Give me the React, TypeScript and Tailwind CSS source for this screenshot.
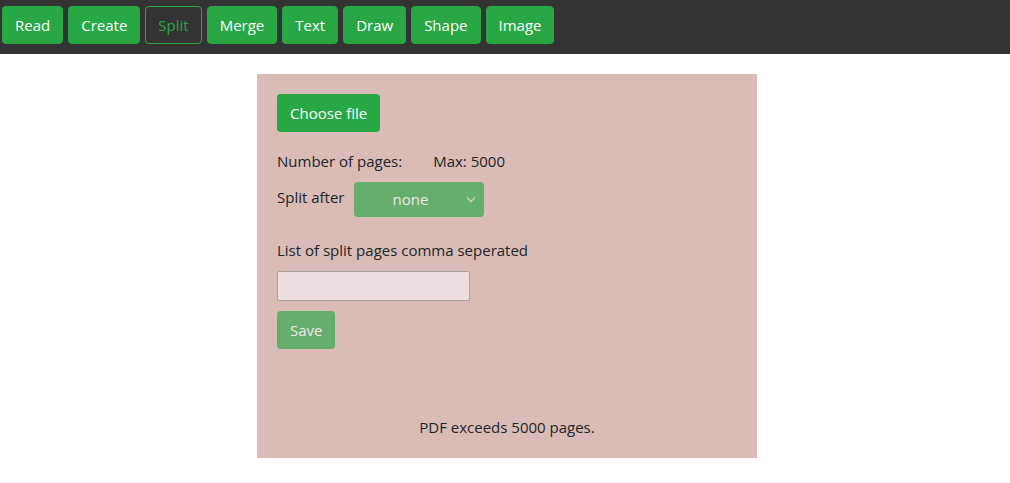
const tabs = ["Read", "Create", "Split", "Merge", "Text", "Draw", "Shape", "Image"];

export default function App() {
  return (
    <div className="min-h-screen bg-white font-['Open_Sans',sans-serif] text-[15px] text-[#212529]">
      <nav className="flex h-[54px] items-start gap-[5px] bg-[#333333] px-[2px] pt-[6px]">
        {tabs.map((t) =>
          t === "Split" ? (
            <button
              key={t}
              className="h-[38px] rounded-[4px] border border-[#28a745] px-[12px] text-[#28a745]"
            >
              {t}
            </button>
          ) : (
            <button
              key={t}
              className="h-[38px] rounded-[4px] border border-[#28a745] bg-[#28a745] px-[12px] text-white"
            >
              {t}
            </button>
          )
        )}
      </nav>

      <div className="flex justify-center pl-[4px] pt-[20px]">
        <div className="flex h-[384px] w-[500px] flex-col bg-[#dabcb6] p-[20px]">
          <div>
            <button className="h-[38px] rounded-[4px] bg-[#28a745] px-[13px] text-white">Choose file</button>
          </div>

          <div className="mt-[18px] flex gap-[31px]">
            <span>Number of pages:</span>
            <span>Max: 5000</span>
          </div>

          <div className="mt-[9px] flex items-center gap-[9px]">
            <span className="-mt-[4px]">Split after</span>
            <div className="relative flex h-[35px] w-[130px] items-center justify-center rounded-[4px] bg-[#28a745] text-white opacity-65">
              <span className="-ml-[16px]">none</span>
              <svg
                className="absolute right-[8px] top-[14px]"
                width="10"
                height="7"
                viewBox="0 0 10 7"
                fill="none"
                stroke="#b7ddb9"
                strokeWidth="1.3"
              >
                <path d="M1 1.5L5 5.5L9 1.5" />
              </svg>
            </div>
          </div>

          <div className="mt-[22px]">List of split pages comma seperated</div>

          <input
            className="mt-[10px] h-[30px] w-[193px] rounded-[2px] border border-[#a9a0a0] bg-[#ecdedc] outline-none"
            type="text"
          />

          <div className="mt-[10px]">
            <button className="h-[38px] rounded-[4px] bg-[#28a745] px-[13px] text-white opacity-65">Save</button>
          </div>

          <div className="mt-auto text-center">PDF exceeds 5000 pages.</div>
        </div>
      </div>
    </div>
  );
}
